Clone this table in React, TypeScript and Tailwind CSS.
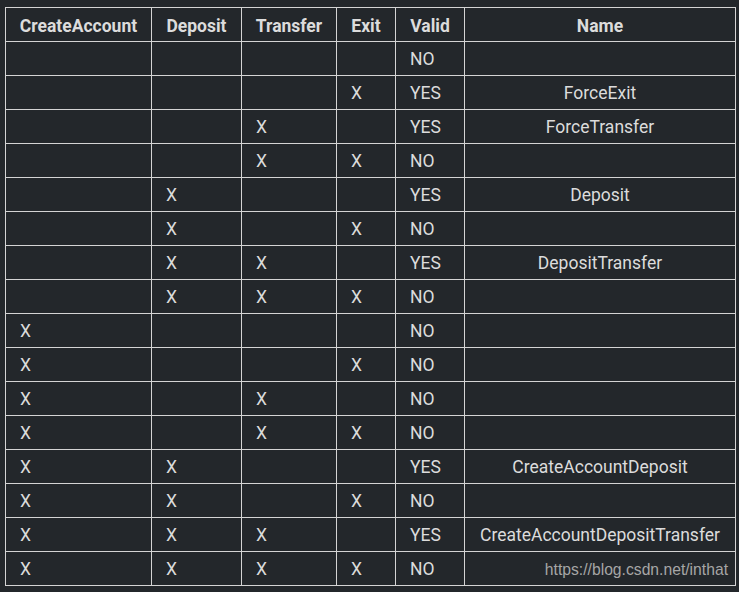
import React from 'react';

type Row = { c: boolean; d: boolean; t: boolean; e: boolean; valid: boolean; name: string };

const rows: Row[] = [
  { c: false, d: false, t: false, e: false, valid: false, name: '' },
  { c: false, d: false, t: false, e: true, valid: true, name: 'ForceExit' },
  { c: false, d: false, t: true, e: false, valid: true, name: 'ForceTransfer' },
  { c: false, d: false, t: true, e: true, valid: false, name: '' },
  { c: false, d: true, t: false, e: false, valid: true, name: 'Deposit' },
  { c: false, d: true, t: false, e: true, valid: false, name: '' },
  { c: false, d: true, t: true, e: false, valid: true, name: 'DepositTransfer' },
  { c: false, d: true, t: true, e: true, valid: false, name: '' },
  { c: true, d: false, t: false, e: false, valid: false, name: '' },
  { c: true, d: false, t: false, e: true, valid: false, name: '' },
  { c: true, d: false, t: true, e: false, valid: false, name: '' },
  { c: true, d: false, t: true, e: true, valid: false, name: '' },
  { c: true, d: true, t: false, e: false, valid: true, name: 'CreateAccountDeposit' },
  { c: true, d: true, t: false, e: true, valid: false, name: '' },
  { c: true, d: true, t: true, e: false, valid: true, name: 'CreateAccountDepositTransfer' },
  { c: true, d: true, t: true, e: true, valid: false, name: '' },
];

const headers = ['CreateAccount', 'Deposit', 'Transfer', 'Exit', 'Valid', 'Name'];
const widths = ['w-[146px]', 'w-[90px]', 'w-[95px]', 'w-[59px]', 'w-[69px]', 'w-[271px]'];

const cell = 'border border-[#d4d4d4] h-[34px] p-0 pt-[1px] px-[14px] text-left whitespace-nowrap';

export default function App() {
  return (
    <div
      className="relative w-[739px] h-[592px] bg-[#23272b] text-[#dcdcdc] text-[17.5px] pt-[7px] pl-[5px]"
      style={{ fontFamily: 'Roboto, "Noto Sans", sans-serif' }}
    >
      <table className="border-collapse table-fixed w-[731px]">
        <colgroup>
          {widths.map((w, i) => (
            <col key={i} className={w} />
          ))}
        </colgroup>
        <thead>
          <tr>
            {headers.map((h) => (
              <th key={h} className="border border-[#d4d4d4] h-[34px] p-0 pt-[3px] font-bold text-center">
                {h}
              </th>
            ))}
          </tr>
        </thead>
        <tbody>
          {rows.map((r, i) => (
            <tr key={i}>
              <td className={cell}>{r.c ? 'X' : ''}</td>
              <td className={cell}>{r.d ? 'X' : ''}</td>
              <td className={cell}>{r.t ? 'X' : ''}</td>
              <td className={cell}>{r.e ? 'X' : ''}</td>
              <td className={cell}>{r.valid ? 'YES' : 'NO'}</td>
              <td className="border border-[#d4d4d4] h-[34px] p-0 pt-[1px] text-center whitespace-nowrap">{r.name}</td>
            </tr>
          ))}
        </tbody>
      </table>
      <div
        className="absolute right-[11px] bottom-[10px] text-[15.7px] text-[#a6a6a6]"
        style={{ fontFamily: '"Liberation Sans", Arial, sans-serif' }}
      >
        https://blog.csdn.net/inthat
      </div>
    </div>
  );
}
